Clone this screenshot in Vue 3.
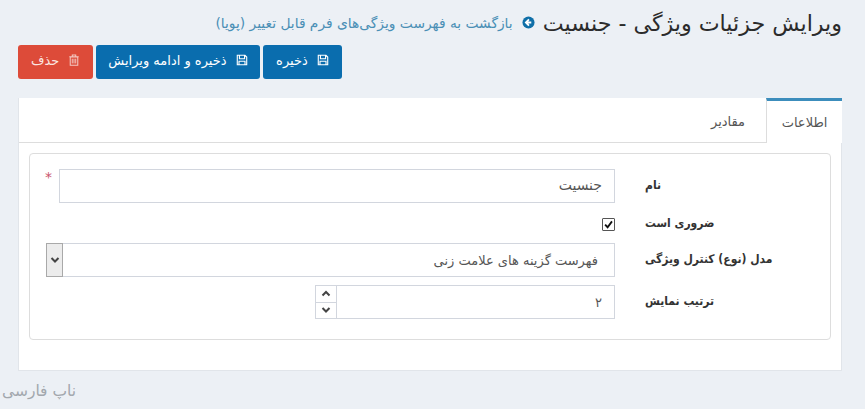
<script setup>
const rows = {
  name: 'جنسیت',
  control: 'فهرست گزینه های علامت زنی',
  order: '۲'
}
</script>

<template>
  <div class="page" dir="rtl">
    <div class="head">
      <h1>ویرایش جزئیات ویژگی - جنسیت</h1>
      <svg class="back-icon" viewBox="0 0 14 14">
        <circle cx="7" cy="7" r="6.5" fill="#0f6fa8" />
        <path d="M7.5 3.6 4.2 7l3.3 3.4M4.6 7h5.4" fill="none" stroke="#fff" stroke-width="2" />
      </svg>
      <a class="back">بازگشت به فهرست ویژگی‌های فرم قابل تغییر (پویا)</a>
    </div>

    <div class="actions">
      <button class="btn blue first">
        <svg class="ico" viewBox="0 0 14 14"><path d="M1.5 1.5h9l2 2v9h-11zM4 1.5v4h6v-4M3.5 12.5v-4h7v4" fill="none" stroke="#fff" stroke-width="1.3" /></svg>
        ذخیره
      </button>
      <button class="btn blue wide">
        <svg class="ico" viewBox="0 0 14 14"><path d="M1.5 1.5h9l2 2v9h-11zM4 1.5v4h6v-4M3.5 12.5v-4h7v4" fill="none" stroke="#fff" stroke-width="1.3" /></svg>
        ذخیره و ادامه ویرایش
      </button>
      <button class="btn red">
        <svg class="ico" viewBox="0 0 14 14"><path d="M1.5 3.2h11M5 3V1.2h4V3M2.6 3.5h8.8V13H2.6z" fill="none" stroke="#f3c9c2" stroke-width="1.2" /><path d="M5 5.5v5.5M7 5.5v5.5M9 5.5v5.5" stroke="#f3c9c2" stroke-width="1.1" /></svg>
        حذف
      </button>
    </div>

    <div class="panel">
      <div class="tabs">
        <div class="tab active">اطلاعات</div>
        <div class="tab">مقادیر</div>
      </div>
      <div class="panel-body">
        <div class="box">
          <div class="row">
            <label>نام</label>
            <div class="field">
              <input class="control name" :value="rows.name" readonly />
              <span class="star">*</span>
            </div>
          </div>
          <div class="row check-row">
            <label>ضروری است</label>
            <div class="field">
              <span class="check">
                <svg viewBox="0 0 12 12"><path d="M2.3 6.2 5 9l4.8-6.4" fill="none" stroke="#111" stroke-width="2" /></svg>
              </span>
            </div>
          </div>
          <div class="row">
            <label>مدل (نوع) کنترل ویژگی</label>
            <div class="field">
              <div class="control select">
                <span class="select-text">{{ rows.control }}</span>
                <span class="arrow">
                  <svg viewBox="0 0 10 8"><path d="M1.5 2 5 5.5 8.5 2" fill="none" stroke="#444" stroke-width="2" /></svg>
                </span>
              </div>
            </div>
          </div>
          <div class="row">
            <label>ترتیب نمایش</label>
            <div class="field">
              <div class="control number">
                <span class="number-text">{{ rows.order }}</span>
                <span class="spin">
                  <span><svg viewBox="0 0 10 8"><path d="M1.5 5.5 5 2l3.5 3.5" fill="none" stroke="#444" stroke-width="2" /></svg></span>
                  <span><svg viewBox="0 0 10 8"><path d="M1.5 2 5 5.5 8.5 2" fill="none" stroke="#444" stroke-width="2" /></svg></span>
                </span>
              </div>
            </div>
          </div>
        </div>
      </div>
    </div>

    <div class="mark">ناپ فارسی</div>
  </div>
</template>

<style>
html, body {
  margin: 0;
  background: #ecf0f5;
}
</style>

<style scoped>
.page {
  width: 865px;
  height: 409px;
  box-sizing: border-box;
  padding: 0 23px 0 18px;
  overflow: hidden;
  background: #ecf0f5;
  font-family: "DejaVu Sans", sans-serif;
  font-size: 13px;
  color: #444;
}
.head {
  display: flex;
  align-items: center;
  height: 45px;
}
h1 {
  margin: 0 0 0 8px;
  font-size: 22.2px;
  font-weight: 400;
  color: #2b2b2b;
  white-space: nowrap;
}
.back-icon {
  width: 13px;
  height: 13px;
  margin-left: 9px;
}
.back {
  color: #4a8fb5;
  font-size: 13.8px;
  white-space: nowrap;
}
.actions {
  display: flex;
  justify-content: flex-end;
  gap: 3px;
}
.btn {
  display: flex;
  align-items: center;
  gap: 9px;
  height: 34px;
  padding: 0 13px 4px;
  border: 0;
  border-radius: 3px;
  color: #fff;
  font: inherit;
  white-space: nowrap;
}
.first {
  padding: 0 13.5px 4px;
}
.wide {
  padding: 0 12px 4px;
}
.blue {
  background: #0a6dae;
}
.red {
  background: #dd4b39;
  color: #fbe6e2;
}
.ico {
  width: 12px;
  height: 12px;
}
.panel {
  margin-top: 19px;
  height: 273px;
  box-sizing: border-box;
  background: #fff;
  border: 1px solid #e1e5ea;
  border-top: 0;
}
.tabs {
  display: flex;
  height: 45px;
  box-sizing: border-box;
  border-bottom: 1px solid #ddd;
}
.tab {
  display: flex;
  align-items: center;
  justify-content: center;
  width: 76px;
  height: 45px;
  margin-bottom: -1px;
  padding-top: 2px;
  box-sizing: border-box;
  color: #555;
}
.active {
  margin-right: -1px;
  background: #fff;
  border-top: 3px solid #3c8dbc;
  border-left: 1px solid #ddd;
  padding-top: 0;
}
.panel-body {
  padding: 10px 10px 30px;
}
.box {
  border: 1px solid #ddd;
  border-radius: 4px;
  padding: 15px 0 20px;
  display: flex;
  flex-direction: column;
  gap: 8px;
}
.row {
  display: flex;
  align-items: center;
  min-height: 34px;
}
.check-row {
  min-height: 24px;
  padding-top: 2px;
  height: 24px;
  box-sizing: border-box;
}
label {
  flex: none;
  width: 215px;
  padding-left: 30px;
  padding-bottom: 2px;
  box-sizing: border-box;
  text-align: left;
  font-family: "DejaVu Sans Condensed", "DejaVu Sans", sans-serif;
  font-size: 12px;
  font-weight: 700;
  color: #333;
  white-space: nowrap;
}
.field {
  position: relative;
  flex: none;
  width: 569px;
}
.control {
  display: flex;
  height: 34px;
  box-sizing: border-box;
  border: 1px solid #d2d6de;
  background: #fff;
  font: inherit;
  color: #555;
}
.name {
  width: 556px;
  padding: 0 12px 2px;
  outline: none;
  direction: rtl;
  font-size: 14px;
}
.star {
  position: absolute;
  left: -1px;
  top: 0;
  color: #c9536b;
  font-size: 14px;
}
.check {
  display: flex;
  width: 13px;
  height: 13px;
  box-sizing: border-box;
  border: 1px solid #555;
  border-radius: 1px;
  background: #fff;
}
.check svg {
  width: 11px;
  height: 11px;
}
.select {
  align-items: center;
  justify-content: space-between;
  width: 569px;
}
.select-text {
  padding-right: 16px;
}
.arrow {
  display: flex;
  align-items: center;
  justify-content: center;
  width: 17px;
  height: 34px;
  margin: -1px;
  box-sizing: border-box;
  border: 1px solid #a9a9a9;
  background: #ececec;
}
.arrow svg {
  width: 10px;
  height: 8px;
}
.number {
  align-items: center;
  justify-content: space-between;
  width: 300px;
}
.number-text {
  padding-right: 12px;
}
.spin {
  display: flex;
  flex-direction: column;
  width: 20px;
  height: 32px;
  border-right: 1px solid #d2d6de;
}
.spin span {
  flex: 1;
  display: flex;
  align-items: center;
  justify-content: center;
}
.spin span + span {
  border-top: 1px solid #d2d6de;
}
.spin svg {
  width: 10px;
  height: 8px;
}
.mark {
  width: 100px;
  margin-top: 11px;
  margin-left: -16px;
  margin-right: auto;
  text-align: left;
  font-size: 15.5px;
  color: #a2a7ad;
}
</style>
